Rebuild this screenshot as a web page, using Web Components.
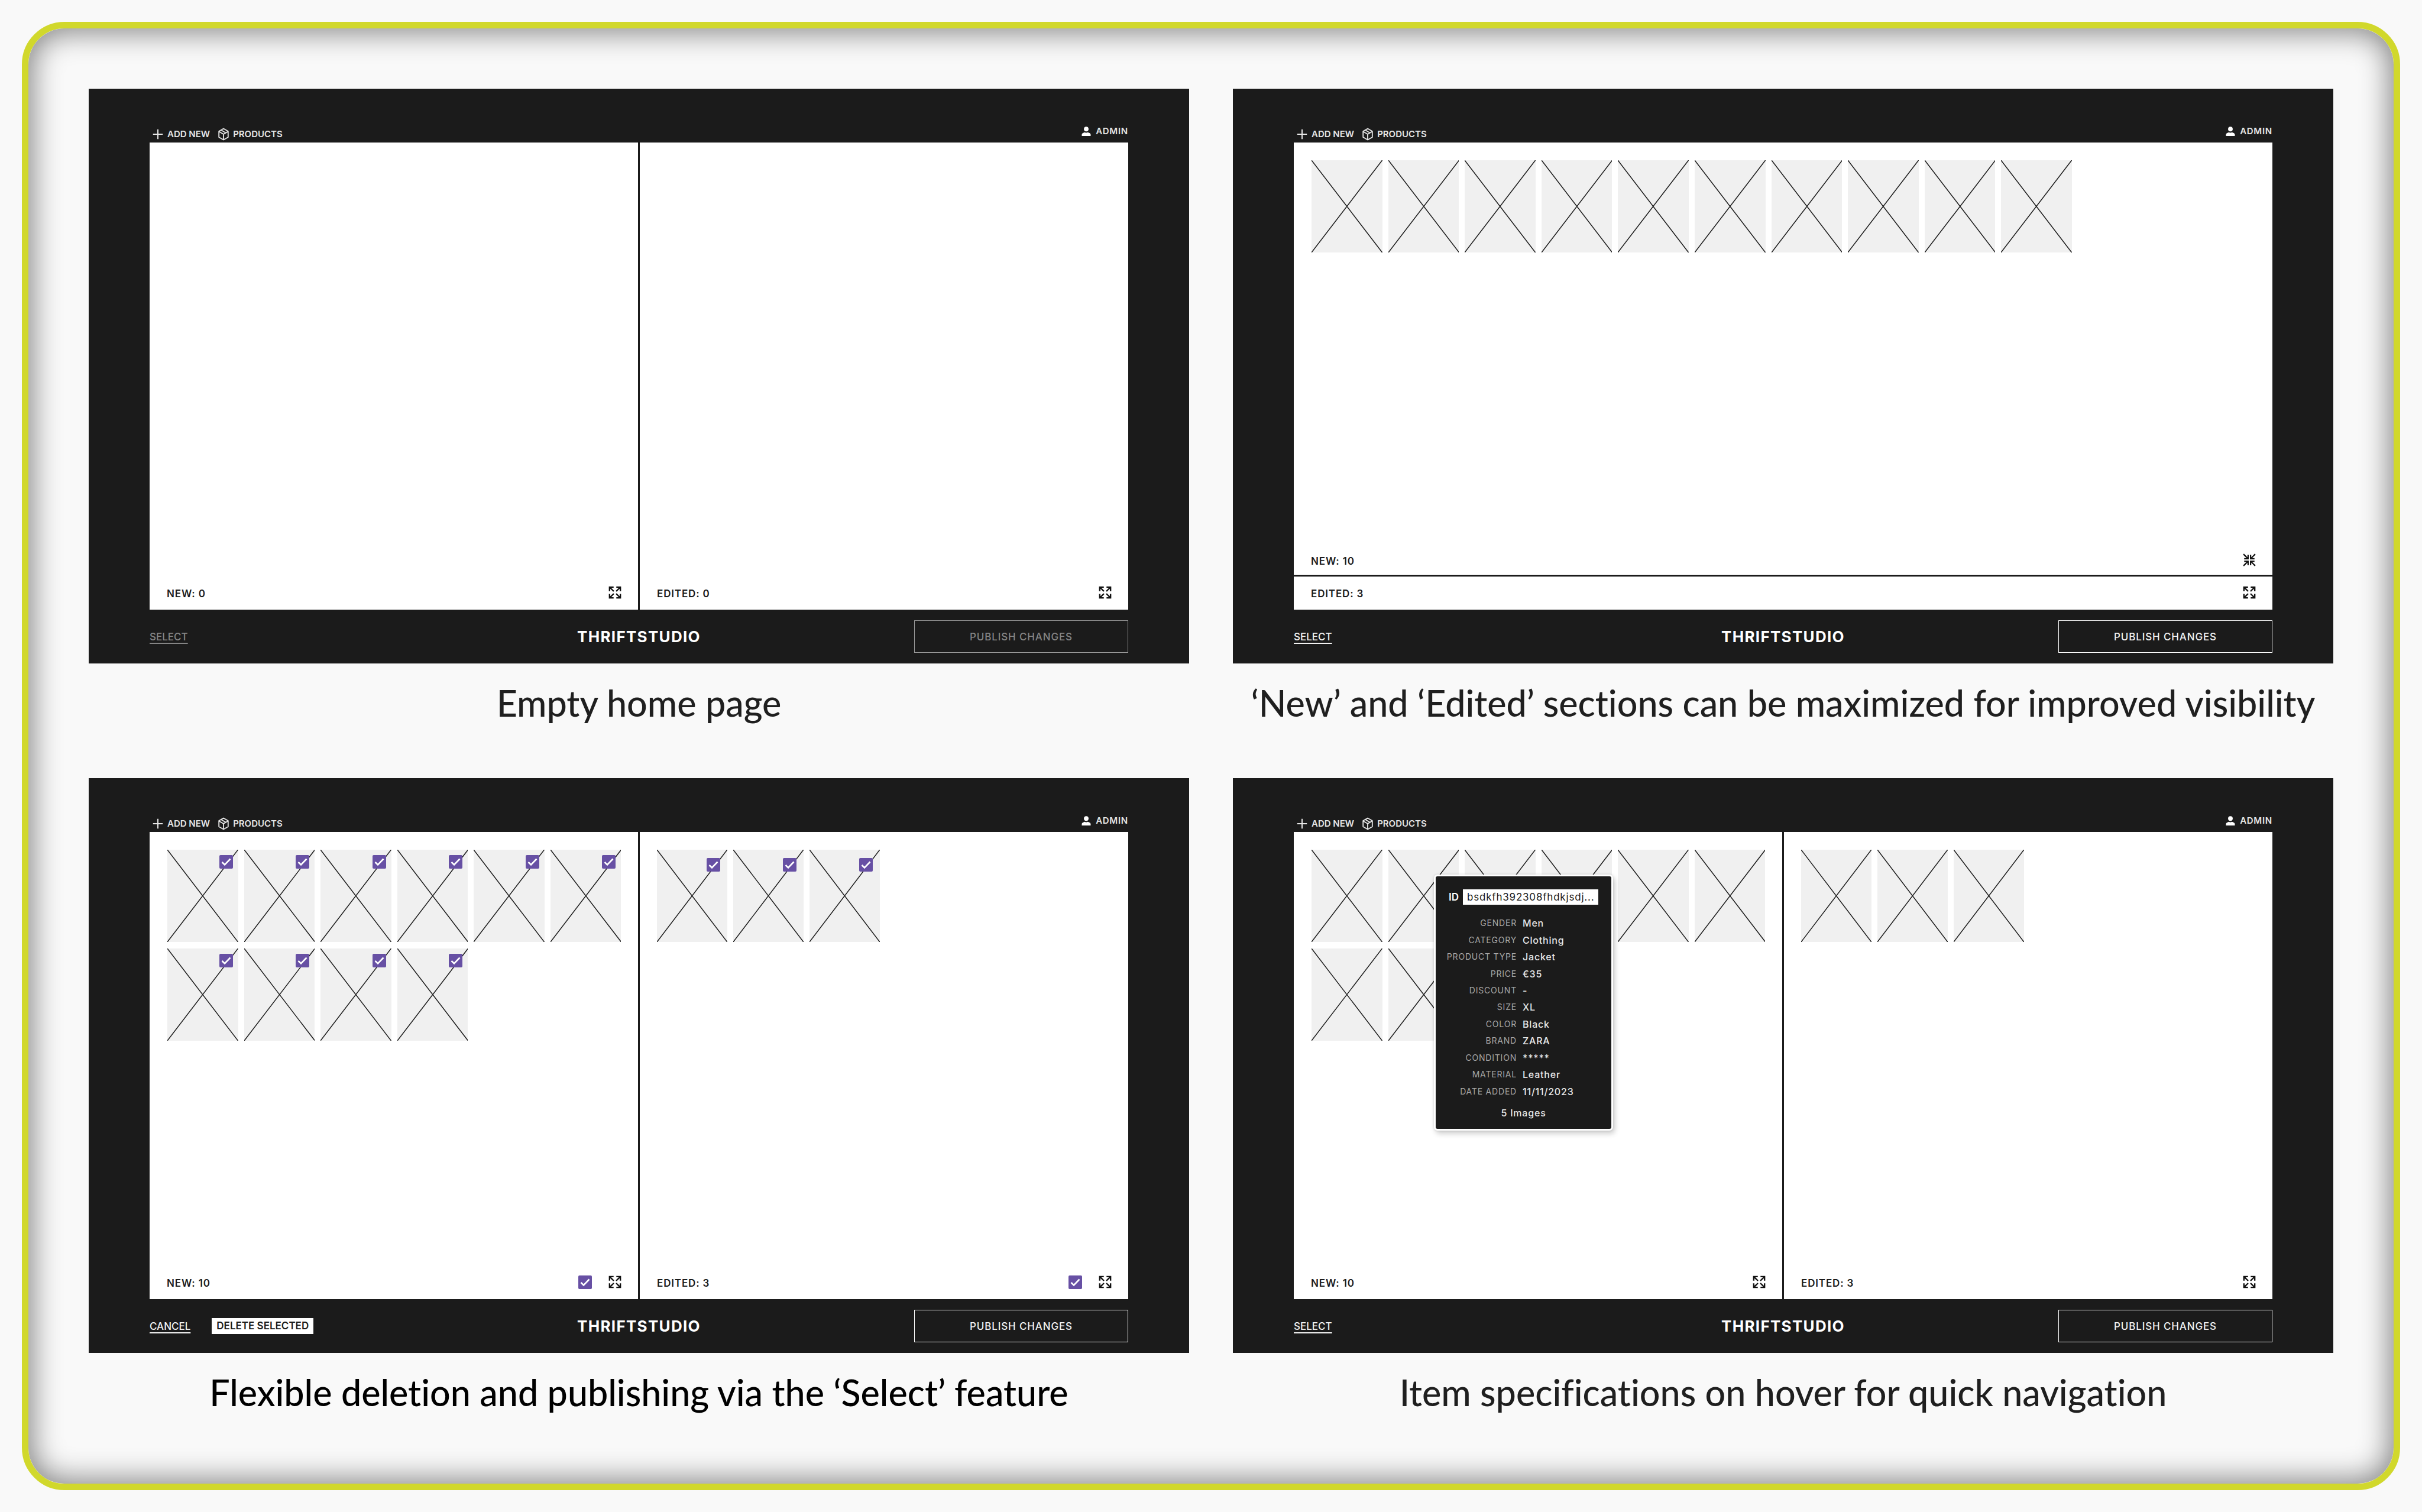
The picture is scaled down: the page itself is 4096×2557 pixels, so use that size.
<!DOCTYPE html>
<html lang="en">
<head>
<meta charset="utf-8">
<title>ThriftStudio admin flows</title>
<style>
  body { margin: 0; background: #f9f9f9; }
</style>
</head>
<body>
<flow-board>
  <flow-card caption="Empty home page">
    <studio-screen idle>
      <item-pane slot="panes" label="NEW: 0"></item-pane>
      <item-pane slot="panes" label="EDITED: 0" side></item-pane>
    </studio-screen>
  </flow-card>
  <flow-card caption="‘New’ and ‘Edited’ sections can be maximized for improved visibility">
    <studio-screen stacked>
      <item-pane slot="panes" label="NEW: 10" items="10" maximized></item-pane>
      <item-pane slot="panes" label="EDITED: 3" minimized></item-pane>
    </studio-screen>
  </flow-card>
  <flow-card caption="Flexible deletion and publishing via the ‘Select’ feature" strong>
    <studio-screen selecting>
      <item-pane slot="panes" label="NEW: 10" items="10" checked></item-pane>
      <item-pane slot="panes" label="EDITED: 3" items="3" checked side></item-pane>
    </studio-screen>
  </flow-card>
  <flow-card caption="Item specifications on hover for quick navigation">
    <studio-screen>
      <item-pane slot="panes" label="NEW: 10" items="10"><item-tooltip></item-tooltip></item-pane>
      <item-pane slot="panes" label="EDITED: 3" items="3" side></item-pane>
    </studio-screen>
  </flow-card>
</flow-board>

<script>
const define = (name, render) => customElements.define(name, class extends HTMLElement {
  connectedCallback() {
    if (!this.shadowRoot) this.attachShadow({ mode: 'open' }).innerHTML = render(this);
  }
});

const glyphs = {
  plus: '<path d="M12 3v18M3 12h18" fill="none" stroke="currentColor" stroke-width="2.2"/>',
  box: '<path d="M12 1.600 20.500 6.600v10.800l-8.500 5-8.500-5V6.600zM3.800 7 12 12l8.200-5M12 12v10.200M7.600 4.400l8.600 5.200" fill="none" stroke="currentColor" stroke-width="2" stroke-linejoin="round"/>',
  user: '<circle cx="12" cy="7" r="5.200" fill="currentColor"/><path d="M2 22.500v-3.200c0-2.600 3-4 6.500-5 2 1.200 5 1.200 7 0 3.500 1 6.500 2.400 6.500 5v3.200z" fill="currentColor"/>',
  expand: '<g fill="none" stroke="currentColor" stroke-width="2.600"><path d="M9.500 2H2v7.500M14.500 2H22v7.500M9.500 22H2v-7.500M14.500 22H22v-7.500"/><path d="M2.500 2.500 9.800 9.800M21.500 2.500 14.200 9.800M2.500 21.500 9.800 14.200M21.500 21.500 14.200 14.200"/></g>',
  collapse: '<g fill="none" stroke="currentColor" stroke-width="2.400"><path d="M2.500 9.700H9.700V2.500M21.500 9.700H14.300V2.500M2.500 14.300H9.700v7.200M21.500 14.300H14.300v7.200"/><path d="M1.200 1.200 9.500 9.500M22.800 1.200 14.500 9.500M1.200 22.800 9.500 14.500M22.800 22.800 14.500 14.500"/></g>'
};

define('line-icon', el => `
  <style>
    :host { display: block; flex: none; width: 22px; height: 22px; }
    svg { display: block; width: 100%; height: 100%; }
  </style>
  <svg viewBox="0 0 24 24" aria-hidden="true">${glyphs[el.getAttribute('name')]}</svg>`);

define('tick-box', el => `
  <style>
    :host { display: block; flex: none; width: 23px; height: 23px; }
    label { display: grid; width: 100%; height: 100%; }
    input, svg { grid-area: 1 / 1; width: 100%; height: 100%; margin: 0; }
    input { appearance: none; border: 2px solid #6750a4; border-radius: 2px; box-sizing: border-box; }
    input:checked { background: #6750a4; }
    svg { pointer-events: none; }
    input:not(:checked) + svg { visibility: hidden; }
  </style>
  <label>
    <input type="checkbox" checked aria-label="${el.getAttribute('label')}">
    <svg viewBox="0 0 23 23" aria-hidden="true"><path d="M4.500 12l4.500 4.500L18.500 6.500" fill="none" stroke="#fff" stroke-width="2.600"/></svg>
  </label>`);

define('item-tile', el => `
  <style>
    :host { display: block; position: relative; height: 156px; background: #f0f0f0; }
    svg { display: block; width: 100%; height: 100%; }
    tick-box { position: absolute; top: var(--tick-top, 9px); right: var(--tick-right, 9px); }
  </style>
  <svg viewBox="0 0 120 156" preserveAspectRatio="none" aria-hidden="true">
    <path d="M0 0l120 156M120 0L0 156" fill="none" stroke="#1b1b1b" stroke-width="1.500"/>
  </svg>
  ${el.hasAttribute('checked') ? '<tick-box label="Select item"></tick-box>' : ''}`);

define('item-pane', el => {
  const count = Number(el.getAttribute('items') || 0);
  const checked = el.hasAttribute('checked');
  const tiles = `<item-tile${checked ? ' checked' : ''}></item-tile>`.repeat(count);
  return `
  <style>
    :host { display: flex; flex: 1; flex-direction: column; position: relative; background: #fff; min-width: 0; }
    :host([minimized]) { flex: 0 0 56px; justify-content: flex-end; }
    :host([side]) { --tick-top: 14px; --tick-right: 12px; }
    .tiles { display: grid; grid-template-columns: repeat(6, 1fr); gap: 11px 10px; padding: 30px 29px 0 30px; }
    :host([side]) .tiles { padding: 30px 34px 0 29px; }
    :host([maximized]) .tiles { grid-template-columns: repeat(10, 1fr); max-width: 1286px; }
    .bar { display: flex; align-items: center; gap: 28px; height: 40px; margin-top: auto; padding: 0 28px 9px 29px; }
    :host([maximized]) .bar { padding-bottom: 5px; }
    .label { margin-right: auto; padding-top: 4px; font: 600 17px/20px Inter, sans-serif; letter-spacing: .05em; color: #1b1b1b; }
    button { border: 0; padding: 0; background: none; color: #111; }
  </style>
  ${count ? `<div class="tiles">${tiles}</div>` : ''}
  <slot></slot>
  <div class="bar">
    <span class="label">${el.getAttribute('label')}</span>
    ${checked ? '<tick-box label="Select all"></tick-box>' : ''}
    <button aria-label="Resize section"><line-icon name="${el.hasAttribute('maximized') ? 'collapse' : 'expand'}"></line-icon></button>
  </div>`;
});

const specs = [
  ['GENDER', 'Men'], ['CATEGORY', 'Clothing'], ['PRODUCT TYPE', 'Jacket'], ['PRICE', '€35'],
  ['DISCOUNT', '-'], ['SIZE', 'XL'], ['COLOR', 'Black'], ['BRAND', 'ZARA'],
  ['CONDITION', '*****'], ['MATERIAL', 'Leather'], ['DATE ADDED', '11/11/2023']
];

define('item-tooltip', () => `
  <style>
    :host {
      position: absolute; left: 237px; top: 72px; z-index: 1; box-sizing: border-box;
      display: flex; flex-direction: column; width: 303px; height: 433px; padding: 22px 0 5px;
      border: 3px solid #fff; border-radius: 6px; background: #1b1b1b; color: #e8e8e8;
      box-shadow: 3px 5px 10px rgba(0, 0, 0, .2), 0 0 4px rgba(0, 0, 0, .12);
      font: 500 16px/20px Inter, sans-serif; letter-spacing: .05em;
    }
    .id { display: flex; align-items: center; gap: 7px; padding-left: 22px; margin-bottom: 17px; font-size: 17px; line-height: 26px; color: #fff; }
    .id b { font-weight: 600; letter-spacing: 0; }
    .id span { padding: 0 7px; background: #fff; color: #1b1b1b; font-weight: 400; }
    dl { display: grid; grid-template-columns: 137px 1fr; grid-auto-rows: 1fr; align-items: center; column-gap: 10px; flex: 1; margin: 0; }
    dt { text-align: right; font-size: 14px; font-weight: 400; color: #a6a6a6; }
    dd { margin: 0; }
    p { margin: 0; text-align: center; line-height: 44px; }
  </style>
  <div class="id"><b>ID</b><span>bsdkfh392308fhdkjsdj...</span></div>
  <dl>${specs.map(([k, v]) => `<dt>${k}</dt><dd>${v}</dd>`).join('')}</dl>
  <p>5 Images</p>`);

define('studio-screen', el => `
  <style>
    :host { display: grid; grid-template-rows: 91px 1fr 91px; aspect-ratio: 1861 / 972; padding: 0 103px; box-sizing: border-box; background: #1b1b1b; color: #e6e6e6; font: 500 15px/20px Inter, sans-serif; }
    header { display: flex; justify-content: space-between; align-items: flex-end; }
    nav { display: flex; gap: 12px; height: 28px; padding-left: 3px; font-weight: 600; }
    a { display: flex; align-items: center; gap: 5px; color: inherit; text-decoration: none; }
    .admin { gap: 7px; height: 38px; font-weight: 600; letter-spacing: .05em; }
    .admin line-icon { width: 18px; height: 18px; color: #fff; }
    .panes { display: flex; gap: 3px; min-height: 0; }
    :host([stacked]) .panes { flex-direction: column; }
    footer { display: grid; grid-template-columns: 1fr auto 1fr; align-items: center; }
    h2 { margin: 0; font: 700 26px/32px Inter, sans-serif; letter-spacing: .05em; color: #fff; }
    .actions { display: flex; align-items: center; gap: 36px; }
    button { font: 500 17px/20px Inter, sans-serif; color: #f2f2f2; background: none; border: 0; padding: 0; }
    .link { text-decoration: underline 2px; text-underline-offset: 4px; }
    .delete { padding: 3px 8px 4px; background: #fff; color: #1b1b1b; font-weight: 600; }
    .publish { justify-self: end; width: 362px; height: 55px; border: 1px solid #fff; letter-spacing: .05em; }
    button:disabled { color: #858585; border-color: #9a9a9a; }
  </style>
  <header>
    <nav>
      <a href="#add"><line-icon name="plus"></line-icon>ADD NEW</a>
      <a href="#products"><line-icon name="box"></line-icon>PRODUCTS</a>
    </nav>
    <a class="admin" href="#admin"><line-icon name="user"></line-icon>ADMIN</a>
  </header>
  <div class="panes"><slot name="panes"></slot></div>
  <footer>
    <div class="actions">
      ${el.hasAttribute('selecting')
        ? '<button class="link">CANCEL</button><button class="delete">DELETE SELECTED</button>'
        : `<button class="link"${el.hasAttribute('idle') ? ' disabled' : ''}>SELECT</button>`}
    </div>
    <h2>THRIFTSTUDIO</h2>
    <button class="publish"${el.hasAttribute('idle') ? ' disabled' : ''}>PUBLISH CHANGES</button>
  </footer>`);

define('flow-card', el => `
  <style>
    :host { display: block; min-width: 0; }
    p { margin: 0; padding-top: 31px; font: 500 61px/72px Lato, sans-serif; font-variant-ligatures: none; text-align: center; white-space: nowrap; color: #1f1f1f; }
    :host([strong]) p { color: #000; }
  </style>
  <slot></slot>
  <p>${el.getAttribute('caption')}</p>`);

define('flow-board', () => `
  <style>
    :host {
      display: grid; grid-template-columns: 1fr 1fr; gap: 91px 74px; align-content: start;
      box-sizing: border-box; margin: 37px; min-height: calc(100vh - 74px); padding: 102px;
      border: 11px solid #d1d82c; border-radius: 72px;
      box-shadow: inset 0 0 48px 8px rgba(0, 0, 0, .45);
    }
    @media (max-width: 2400px) { :host { grid-template-columns: 1fr; } }
  </style>
  <slot></slot>`);
</script>
</body>
</html>
